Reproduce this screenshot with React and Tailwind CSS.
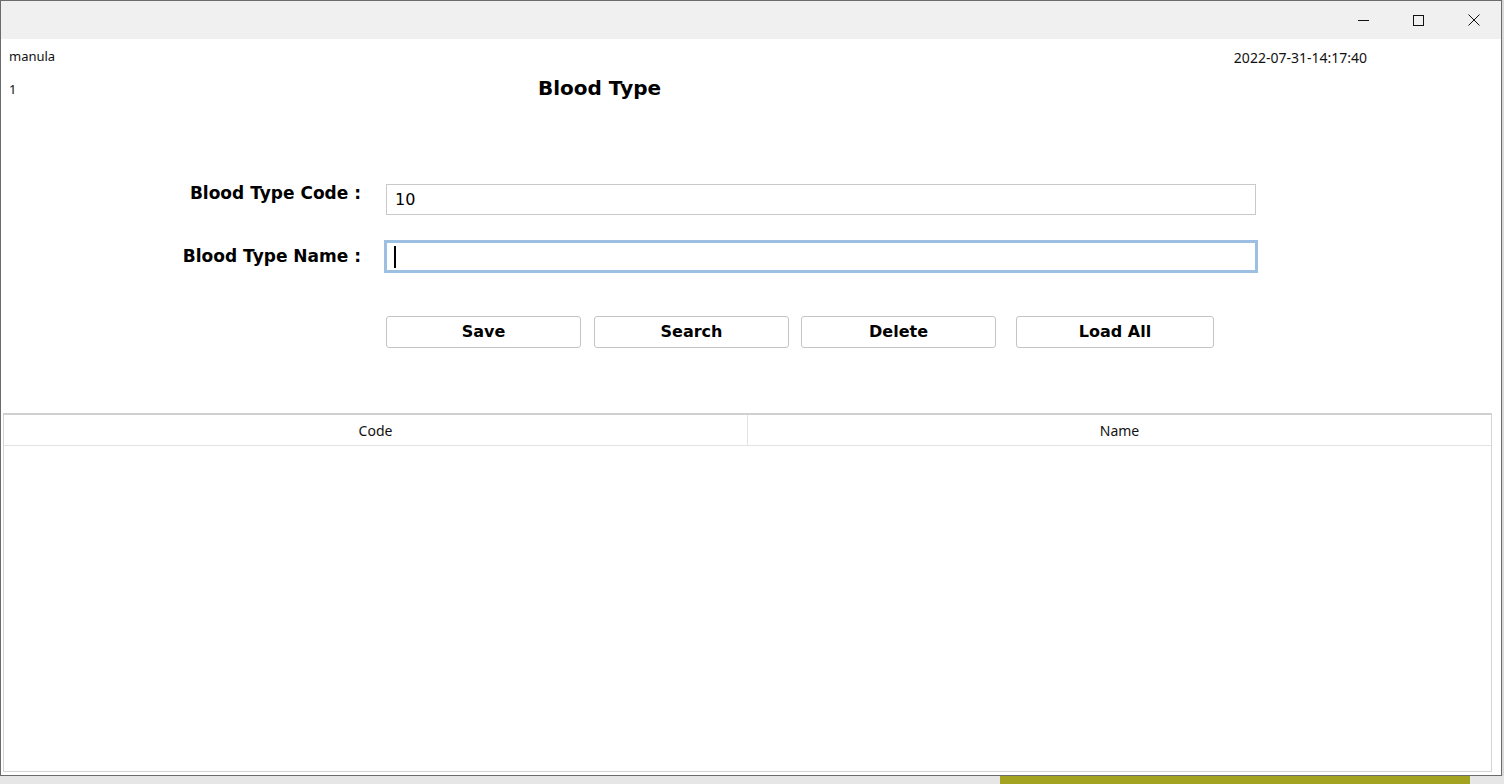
import { useState } from 'react';

const ui = { fontFamily: '"Noto Sans", "Open Sans", sans-serif' };
const bold = { fontFamily: '"DejaVu Sans", Verdana, sans-serif' };

function CaptionButtons() {
  return (
    <div className="flex h-full">
      <button className="w-[55px] h-full flex items-center justify-center">
        <svg width="11" height="11" viewBox="0 0 11 11">
          <path d="M0 5.5h11" stroke="#111" strokeWidth="1" />
        </svg>
      </button>
      <button className="w-[55px] h-full flex items-center justify-center">
        <svg width="11" height="11" viewBox="0 0 11 11">
          <rect x="0.5" y="0.5" width="10" height="10" fill="none" stroke="#111" strokeWidth="1" />
        </svg>
      </button>
      <button className="w-[55px] h-full flex items-center justify-center">
        <svg width="12" height="12" viewBox="0 0 12 12">
          <path d="M0.5 0.5l11 11M11.5 0.5l-11 11" stroke="#111" strokeWidth="1" />
        </svg>
      </button>
    </div>
  );
}

export default function App() {
  const [code, setCode] = useState('10');
  const [name, setName] = useState('');
  const buttons = [
    { label: 'Save', w: 'w-[195px]', ml: 'ml-0' },
    { label: 'Search', w: 'w-[195px]', ml: 'ml-[13px]' },
    { label: 'Delete', w: 'w-[195px]', ml: 'ml-[12px]' },
    { label: 'Load All', w: 'w-[198px]', ml: 'ml-[20px]' },
  ];

  return (
    <div className="w-[1504px] h-[784px] bg-[#d9d9d9] flex flex-col overflow-hidden">
      <div className="w-[1502px] h-[776px] border border-[#6b6b6b] bg-white flex flex-col">
        {/* title bar */}
        <div className="h-[38px] bg-[#f0f0f0] flex justify-end">
          <CaptionButtons />
        </div>

        <div className="h-[36px] flex items-center justify-between pl-[8px] pr-[134px] text-[#111]" style={ui}>
          <span className="text-[13px]">manula</span>
          <span className="text-[14px]">2022-07-31-14:17:40</span>
        </div>
        <div className="h-[26px] flex items-center pl-[8px]">
          <span className="w-[529px] text-[13px] text-[#111] pt-[4px]" style={ui}>1</span>
          <h1 className="text-[20px] font-bold text-black leading-none" style={bold}>Blood Type</h1>
        </div>

        {/* form */}
        <div className="mt-[83px] flex items-start">
          <label className="w-[360px] text-right text-[17px] leading-[18px] font-bold text-black" style={bold}>Blood Type Code :</label>
          <input
            value={code}
            onChange={(e) => setCode(e.target.value)}
            className="ml-[25px] w-[870px] h-[31px] border border-[#c9c9c9] px-[8px] text-[16px] text-black outline-none"
            style={bold}
          />
        </div>
        <div className="mt-[25px] flex items-center">
          <label className="w-[360px] text-right text-[17px] font-bold text-black" style={bold}>Blood Type Name :</label>
          <div className="ml-[23px] w-[874px] h-[33px] border-[3px] border-[#9cbfe2] flex items-center px-[7px]">
            <span className="w-[2px] h-[22px] bg-black" />
            <input
              value={name}
              onChange={(e) => setName(e.target.value)}
              className="flex-1 h-full text-[16px] outline-none"
              style={bold}
            />
          </div>
        </div>

        <div className="mt-[43px] flex pl-[385px]">
          {buttons.map((b) => (
            <button
              key={b.label}
              className={`${b.w} ${b.ml} h-[32px] border border-[#c4c4c4] rounded-[3px] bg-white text-[16px] font-bold text-black`}
              style={bold}
            >
              {b.label}
            </button>
          ))}
        </div>

        {/* table */}
        <div className="mt-[65px] ml-[2px] w-[1489px] flex-1 mb-[3px] border border-[#d4d4d4] border-t-2 border-t-[#d0d0d0] flex flex-col">
          <div className="h-[31px] flex border-b border-[#e3e3e3] text-[14px] text-[#111]" style={ui}>
            <div className="w-[744px] border-r border-[#e3e3e3] flex items-center justify-center">Code</div>
            <div className="flex-1 flex items-center justify-center">Name</div>
          </div>
          <div className="flex-1 bg-white" />
        </div>
      </div>
      <div className="flex-1 flex">
        <div className="w-[1000px] bg-[#e6e6e6]" />
        <div className="w-[470px] bg-[#a3a321]" />
        <div className="flex-1 bg-[#e6e6e6]" />
      </div>
    </div>
  );
}
